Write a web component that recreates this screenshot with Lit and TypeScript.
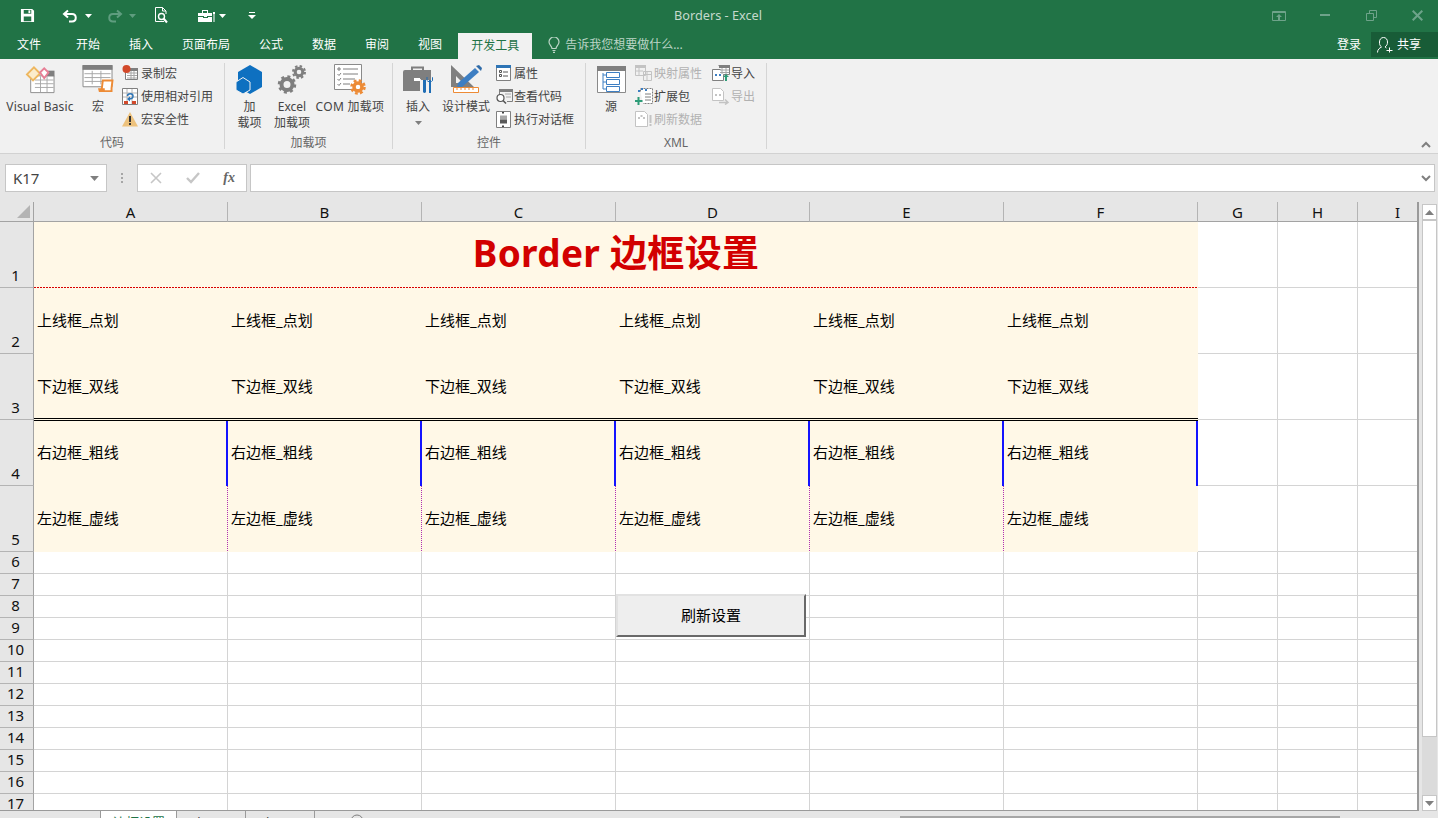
import { LitElement, html, css } from "lit";
import { customElement } from "lit/decorators.js";

const icons: Record<string, any> = {
  save: html`<svg width="15" height="15" viewBox="0 0 16 16"><path fill="#fff" fill-rule="evenodd" d="M1 1h12l2 2v12H1zM4 2v4h8V2zM4 9v5h8V9z"/><rect x="9" y="2.500" width="2" height="3" fill="#fff"/></svg>`,
  undo: html`<svg width="16" height="14" viewBox="0 0 16 14"><path fill="none" stroke="#fff" stroke-width="2" d="M6 1.500 2 5l4 3.500M2.500 5H10c5 0 5 7.500 0 7.500H7"/></svg>`,
  redo: html`<svg width="16" height="14" viewBox="0 0 16 14"><path fill="none" stroke="#5f9d7f" stroke-width="2" d="M10 1.500 14 5l-4 3.500M13.500 5H6c-5 0-5 7.500 0 7.500h3"/></svg>`,
  preview: html`<svg width="16" height="17" viewBox="0 0 16 17"><path fill="none" stroke="#fff" d="M10 14.500H1.500v-14h7l3.500 3.500v3M8.500.5v3.500H12"/><circle cx="7.500" cy="9.500" r="3" fill="none" stroke="#fff" stroke-width="1.400"/><path stroke="#fff" stroke-width="2" d="m9.500 11.500 3.500 4"/></svg>`,
  tool: html`<svg width="18" height="14" viewBox="0 0 18 14"><path fill="#fff" d="M0 4h14v3H9v1H6V7H0zM0 8h5v1h5V8h4v5H0zM4 1h6v3H9V2H5v2H4z"/><path fill="#fff" d="M15 3h2v2h-.5v8h-1V5H15z"/></svg>`,
  custom: html`<svg width="8" height="8" viewBox="0 0 8 8"><path fill="#fff" d="M1 0h6v1H1zM0 3h8L4 7z"/></svg>`,
  vb: html`<svg width="31" height="28" viewBox="0 0 32 30"><path fill="#fff" stroke="#8a8a8a" d="M5.500 10.500h25v18h-25z"/><path fill="#7f7f7f" d="M22 5h9v6h-9z"/><path stroke="#a6a6a6" d="M10 15h20M10 19h20M10 23h20M16 11v17M23 11v17"/><path fill="#fbeccb" stroke="#eeb75f" stroke-width="2" d="M1.500 9 9 1.500 15.500 8 8 15.500z"/><path fill="#fff" stroke="#e77f96" stroke-width="2" d="M15.500 7 20 2.500 24.500 7 20 13z"/></svg>`,
  macro: html`<svg width="32" height="29" viewBox="0 0 32 30"><path fill="#fff" stroke="#8a8a8a" d="M.5.500h30v22H.5z"/><path fill="#7f7f7f" d="M0 0h31v5H0z"/><path stroke="#a6a6a6" d="M2 9h27M2 13h27M2 17h20M10 6v14M19 6v14"/><path fill="#fff" stroke="#ed8b36" stroke-width="2" d="M21 16h10l-1 8v3H18c2-1 2-2 2-3z"/><path fill="#ed8b36" d="M16 24h7v4h-6z"/></svg>`,
  rec: html`<svg width="16" height="16" viewBox="0 0 16 16"><path fill="#fff" stroke="#7f7f7f" d="M3.500 3.500h12v11h-12z"/><path fill="#7f7f7f" d="M8 3h8v3H8z"/><path stroke="#a6a6a6" d="M5 8h10M5 10.500h10M5 13h10M9 6v8M12 6v8"/><circle cx="4.500" cy="4" r="4" fill="#d2492a"/></svg>`,
  rel: html`<svg width="17" height="17" viewBox="0 0 17 17"><path fill="#fff" stroke="#7f7f7f" d="M.5.500h15v16H.5z"/><path stroke="#b4b4b4" d="M1 5h14M1 9h14M5 1v15M10 1v15"/><path fill="#d2492a" d="M2 13h4v3H2zM10 13h4v3h-4z"/><path fill="none" stroke="#2e75b6" stroke-width="1.500" d="M5.500 8c0-3 5.500-3 5.500 0 0 2-1.500 3-4 3"/><path fill="#2e75b6" d="M8 8.500v5l-3-2.500z"/></svg>`,
  warn: html`<svg width="16" height="15" viewBox="0 0 16 15"><path fill="#edc27d" d="M8 0l8 14.500H0z"/><path fill="#333" d="M7 4h2v6H7zM7 11h2v2H7z"/></svg>`,
  addin: html`<svg width="27" height="29" viewBox="0 0 27 29"><path fill="#0e70c0" d="M14 0 26 7v15l-12 7L2 22V7z"/><path fill="#0e70c0" stroke="#f1f1f1" d="M7 12.500 14 17v8l-7 4-7-4v-8z"/></svg>`,
  gears: html`<svg width="30" height="30" viewBox="0 0 30 30"><g fill="none" stroke="#7f7f7f"><circle cx="10" cy="19.500" r="5.500" stroke-width="4"/><circle cx="10" cy="19.500" r="8" stroke-width="2.500" stroke-dasharray="3 3.300"/><circle cx="22" cy="7" r="3.800" stroke-width="3"/><circle cx="22" cy="7" r="6" stroke-width="2" stroke-dasharray="2.500 2.200"/></g></svg>`,
  com: html`<svg width="32" height="32" viewBox="0 0 32 32"><path fill="#fff" stroke="#8a8a8a" d="M.5.500h27v25H.5z"/><path stroke="#7f7f7f" d="M9 5h15M9 10h15M9 15h12M9 20h7"/><path fill="none" stroke="#7f7f7f" d="M4 4h2v2H4zM3.500 10l1.500 1.500L7 9M3.500 15l1.500 1.500L7 14M3.500 20l1.500 1.500L7 19"/><g fill="none" stroke="#ed8b36"><circle cx="24" cy="23" r="4" stroke-width="3.500"/><circle cx="24" cy="23" r="6.500" stroke-width="2.500" stroke-dasharray="2.800 2.300"/></g></svg>`,
  insert: html`<svg width="30" height="28" viewBox="0 0 30 28"><path fill="none" stroke="#7f7f7f" stroke-width="2" d="M9 5V1.500h11V5"/><path fill="#7f7f7f" d="M2 4h26v10H18v-1h-6v2h5v10H0V14h10v1H0V6q0-2 2-2z"/><path fill="#fff" d="M11 12h6v3h-6z"/><path fill="#1f6db5" d="M20 14h3v12q-1.500 2-3 0zM26 14h2v13h-2zM24.500 11v4h4.500v-4l1 .5v3l-2 1.500h-3l-1.500-2v-3z"/></svg>`,
  design: html`<svg width="32" height="30" viewBox="0 0 32 30"><path fill="#7f7f7f" fill-rule="evenodd" d="M1 0 24 22H1zM6 11v7h7z"/><path fill="#3d7ec2" d="M8 18 25 3l4 4-17 15-5 1z"/><path fill="#2f6ba8" d="M26 1l3-1 3 3-1 3z"/><path fill="#fff" stroke="#ed8b36" d="M3.500 22.500h25v5h-25z"/><path stroke="#ed8b36" d="M7 23v2M11 23v2M15 23v2M19 23v2M23 23v2"/></svg>`,
  prop: html`<svg width="15" height="16" viewBox="0 0 15 16"><path fill="#fff" stroke="#7f7f7f" d="M.5.500h14v15H.5z"/><path fill="#2e75b6" d="M0 0h15v3H0z"/><path stroke="#555" d="M7 7h5M7 11h5"/><path fill="none" stroke="#555" d="M3.500 5.500h2v2h-2zM3.500 9.500h2v2h-2z"/></svg>`,
  code: html`<svg width="17" height="17" viewBox="0 0 17 17"><path fill="none" stroke="#7f7f7f" d="M3.500 7V2.500h13v11H11"/><path fill="#7f7f7f" d="M3 1h14v3H3z"/><path stroke="#a6a6a6" d="M9 6h6M10 9h5"/><circle cx="4.500" cy="10" r="3.500" fill="#fff" stroke="#555" stroke-width="1.200"/><path stroke="#555" stroke-width="1.600" d="m7 12.500 3 3"/></svg>`,
  dialog: html`<svg width="15" height="17" viewBox="0 0 15 17"><path fill="#fff" stroke="#7f7f7f" d="M.5.500h14v16H.5z"/><path fill="#444" d="M6 1h2v1.500H6zM6 14.500h2V16H6z"/><path fill="#a6a6a6" d="M4 4.500h7v4H4z"/><path fill="#595959" d="M4 8.500h7v4H4z"/></svg>`,
  source: html`<svg width="29" height="27" viewBox="0 0 29 27"><path fill="#fff" stroke="#8a8a8a" d="M.5.500h28v26H.5z"/><path fill="#7f7f7f" d="M0 0h29v5H0z"/><path fill="#fff" stroke="#3d7ec2" d="M9.500 6.500h13v5h-13zM9.500 13.500h13v5h-13zM9.500 20.500h13v5h-13z"/><path stroke="#3d7ec2" d="M6 7v16M6 9h3M6 16h3M6 23h3"/></svg>`,
  map: html`<svg width="17" height="16" viewBox="0 0 17 16"><path fill="none" stroke="#c3c3c3" d="M.5.500h10v10H.5zM8.500 6.500h8v9h-8z"/><path fill="#c3c3c3" d="M0 0h11v3H0z"/><path stroke="#c3c3c3" d="M1 6h7M4 3v7M9 9.500h7M12 7v8"/></svg>`,
  pack: html`<svg width="19" height="18" viewBox="0 0 19 18"><path fill="#fff" stroke="#7f7f7f" stroke-dasharray="2 1" d="M5.500 4.500V1.500h12v15H8"/><path stroke="#7f7f7f" d="M10 7h6M10 10h6M10 13h6"/><path fill="#3d7ec2" d="M3 3h2v2H3zM10 2h2v2h-2zM6 1h2v2H6z"/><path fill="#2e9c78" d="M2.500 10h2v3h3v2h-3v3h-2v-3H0v-2h2.500z"/></svg>`,
  imp: html`<svg width="18" height="17" viewBox="0 0 18 17"><path fill="#fff" stroke="#7f7f7f" d="M.5 4.500h11v11H.5z"/><path fill="#fff" stroke="#7f7f7f" d="M6.500.5h11v9h-6"/><path fill="#7f7f7f" d="M7 0h11v3H7z"/><path stroke="#a6a6a6" d="M8 5h9M8 7.500h9M10 3v6M14 3v6"/><path fill="#3d7ec2" d="M3 9h2v2H3zM7 9h2v2H7z"/><path fill="#2e9c78" d="M14 9l3 3h-2v4h-2v-4h-2z"/></svg>`,
  exp: html`<svg width="18" height="17" viewBox="0 0 18 17"><path fill="#fff" stroke="#c3c3c3" d="M.5.500h8l3 3v9h-11z"/><path fill="#c3c3c3" d="M3 6h2v2H3zM7 6h2v2H7z"/><path fill="none" stroke="#c3c3c3" stroke-width="1.500" d="M7 14.500h9m-3-3 3 3-3 2"/></svg>`,
  refresh: html`<svg width="19" height="18" viewBox="0 0 19 18"><path fill="#fff" stroke="#c3c3c3" d="M.5 1.500h9l3 3v12H.5z"/><path fill="#c3c3c3" d="M3 7h2v2H3zM8 7h2v2H8zM5.500 5h2v2h-2zM14.500 5h2v8h-2zM14.500 14h2v2h-2z"/></svg>`,
  bulb: html`<svg width="12" height="16" viewBox="0 0 12 16"><path fill="none" stroke="#bcd5c7" stroke-width="1.200" d="M4 11.500C4 9 1 8 1 5a5 5 0 0 1 10 0c0 3-3 4-3 6.500zM4.500 13.500h3M5 15.300h2"/></svg>`,
  user: html`<svg width="16" height="16" viewBox="0 0 16 16"><path fill="none" stroke="#fff" d="M.5 15.500c0-3 2-4.500 4-5.500-2-1.500-2-3-2-5 0-2.500 1.500-4.500 4-4.500s4 2 4 4.500c0 2-.5 3.500-2.500 5 .5.500 1 .7 1.500 1M9.500 13.500h6M12.500 10.500v5"/></svg>`,
  pin: html`<svg width="14" height="10" viewBox="0 0 14 10"><path fill="none" stroke="#6ea38a" d="M.5.500h13v9H.5z"/><path fill="#6ea38a" d="M1 1h12v1H1zM7 3l3 3H8v3H6V6H4z"/></svg>`,
  min: html`<svg width="10" height="3" viewBox="0 0 10 3"><path fill="#6ea38a" d="M0 0h10v2H0z"/></svg>`,
  restore: html`<svg width="11" height="11" viewBox="0 0 11 11"><path fill="none" stroke="#6ea38a" d="M.5 3.500h7v7h-7zM3.500 3V.5h7v7H8"/></svg>`,
  close: html`<svg width="11" height="11" viewBox="0 0 11 11"><path stroke="#6ea38a" stroke-width="2" d="m.7.700 9.600 9.600M10.300.700.700 10.300"/></svg>`,
  plus: html`<svg width="14" height="14" viewBox="0 0 14 14"><circle cx="7" cy="7" r="6" fill="none" stroke="#7f7f7f"/><path stroke="#7f7f7f" d="M4 7h6M7 4v6"/></svg>`,
};

const caret = (c: string, w = 7, h = 4) =>
  html`<svg class="caret" width=${w} height=${h} viewBox="0 0 7 4"><path fill=${c} d="M0 0h7L3.500 4z"/></svg>`;

type Small = { icon: string; text: string; off?: boolean };
const small = (it: Small) =>
  html`<div class="small ${it.off ? "off" : ""}"><span class="sicon">${icons[it.icon]}</span><span>${it.text}</span></div>`;
const big = (icon: string, lines: string[], cls: string, extra?: unknown) =>
  html`<div class="big ${cls}"><span class="bicon">${icons[icon]}</span>${lines.map((l) => html`<span class="bl">${l}</span>`)}${extra ?? ""}</div>`;

const COLS = ["A", "B", "C", "D", "E", "F"];
const ROW_TEXT = ["上线框_点划", "下边框_双线", "右边框_粗线", "左边框_虚线"];
const ROW_CLASS = ["r2", "r3", "r4", "r5"];

@customElement("app-root")
export class AppRoot extends LitElement {
  static styles = css`
    :host { display: block; width: 1438px; height: 818px; overflow: hidden; font-family: "Noto Sans", "Noto Sans CJK SC", sans-serif; font-size: 12px; color: #444; background: #e6e6e6; }
    .app { display: flex; flex-direction: column; width: 1438px; height: 818px; }
    .title { height: 31px; flex: none; background: #217346; display: flex; align-items: center; position: relative; color: #cfe0d6; }
    .qat { display: flex; align-items: center; padding-left: 20px; }
    .qat > * { flex: none; display: flex; }
    .m1 { margin-right: 27px; } .m2 { margin-right: 7px; } .m3 { margin-right: 15px; } .m4 { margin-right: 6px; }
    .m5 { margin-right: 18px; } .m6 { margin-right: 28px; } .m7 { margin-right: 3px; } .m8 { margin-right: 22px; }
    .appname { position: absolute; left: 0; right: 0; top: 8px; text-align: center; line-height: 15px; padding-right: 2px; font-size: 12.7px; color: #c5dacd; }
    .win { margin-left: auto; margin-right: -2px; display: flex; align-items: center; }
    .win span { width: 46px; display: flex; justify-content: center; }
    .tabs { height: 28px; flex: none; background: #217346; display: flex; align-items: stretch; padding-left: 17px; gap: 29px; color: #fff; line-height: 28px; }
    .tabs .first { margin-right: 6px; }
    .tabs .active { background: #f1f1f1; color: #217346; padding: 0 13px; margin: 2px -13px 0; line-height: 26px; }
    .tell { display: flex; align-items: center; gap: 5px; color: #bcd5c7; }
    .acct { margin-left: auto; display: flex; align-items: center; gap: 10px; }
    .share { width: 67px; height: 25px; margin-top: -1px; background: #185c37; display: flex; align-items: center; gap: 4px; padding-left: 6px; box-sizing: border-box; }

    .ribbon { height: 94px; flex: none; background: #f1f1f1; border-bottom: 1px solid #d2d2d2; box-sizing: content-box; display: flex; position: relative; }
    .group { position: relative; display: flex; flex: none; box-sizing: border-box; height: 94px; padding-top: 4px; }
    .group::after { content: ""; position: absolute; right: 0; top: 4px; height: 86px; width: 1px; background: #d5d5d5; }
    .g1 { width: 225px; padding-left: 6px; } .g2 { width: 168px; } .g3 { width: 193px; padding-left: 7px; } .g4 { width: 181px; padding-left: 11px; }
    .glabel { position: absolute; left: 0; right: 1px; top: 76px; text-align: center; line-height: 16px; color: #666; }
    .big { display: flex; flex-direction: column; align-items: center; flex: none; color: #444; }
    .bicon { height: 33px; display: flex; align-items: center; justify-content: center; margin-bottom: 3px; }
    .bl { line-height: 16px; white-space: nowrap; }
    .big .caret { margin-top: 6px; }
    .w-vb { width: 68px; } .w-vb .bl { letter-spacing: 0.15px; } .w-macro { width: 48px; }
    .w-add { width: 49px; } .w-xl { width: 36px; } .w-com { width: 70px; margin-left: 5px; } .w-com .bl { letter-spacing: 0.3px; }
    .w-ins { width: 36px; } .w-des { width: 48px; margin-left: 6px; } .w-src { width: 28px; }
    .col { display: flex; flex-direction: column; flex: none; gap: 3px; }
    .c-ctl { margin-left: 6px; } .c-ctl .sicon { width: 18px; } .c-xml { margin-left: 10px; } .c-xml2 { margin-left: 10px; }
    .small { height: 20px; display: flex; align-items: center; white-space: nowrap; color: #444; }
    .small.off { color: #b1b1b1; }
    .sicon { width: 19px; display: flex; justify-content: flex-start; flex: none; }
    .chev { position: absolute; right: 7px; bottom: 5px; }

    .fbar { height: 48px; flex: none; background: #e6e6e6; display: flex; align-items: flex-start; padding: 10px 3px 0 5px; box-sizing: border-box; }
    .fbox { height: 28px; box-sizing: border-box; background: #fff; border: 1px solid #c6c6c6; display: flex; align-items: center; }
    .name { width: 102px; padding: 0 7px 0 7px; justify-content: space-between; font-size: 15px; color: #444; }
    .dots { width: 30px; display: flex; flex-direction: column; align-items: center; justify-content: center; height: 28px; gap: 2px; }
    .dots i { width: 2px; height: 2px; background: #a6a6a6; }
    .fx { width: 110px; justify-content: space-between; padding: 0 11px 0 12px; margin-right: 3px; color: #666; }
    .fx i { font-family: "Liberation Serif", serif; font-size: 14px; font-weight: bold; }
    .input { flex: 1; justify-content: flex-end; padding-right: 3px; }

    .body { flex: 1; min-height: 0; display: flex; }
    .sheet { position: relative; width: 1419px; height: 608px; overflow: hidden; background: #fff; box-sizing: border-box; border-right: 2px solid #9a9a9a; }
    .grid { display: grid; grid-template-columns: 34px repeat(6, 194px) 80px 80px 80px; grid-template-rows: 20px repeat(5, 66px) repeat(12, 22px); font-size: 15px; color: #000; }
    .grid > div { box-sizing: border-box; min-width: 0; }
    .ch { background: #e6e6e6; border-bottom: 1px solid #a3a3a3; border-right: 1px solid #b4b4b4; text-align: center; line-height: 20px; color: #111; }
    .corner { background: #e6e6e6; border-bottom: 1px solid #a3a3a3; border-right: 1px solid #a3a3a3; display: flex; align-items: flex-end; justify-content: flex-end; padding: 0 3px 3px 0; }
    .rh { background: #e6e6e6; border-bottom: 1px solid #b4b4b4; border-right: 1px solid #a3a3a3; display: flex; align-items: flex-end; justify-content: center; line-height: 23px; padding: 0 2px 0 0; color: #111; }
    .c { border-right: 1px solid #d4d4d4; border-bottom: 1px solid #d4d4d4; }
    .f { background-color: #fff8e7; display: flex; align-items: center; padding: 0 0 4px 3px; white-space: nowrap; position: relative; }
    .titlecell { grid-column: span 6; justify-content: center; padding: 0 0 8px; font-size: 37px; letter-spacing: 0.3px; font-weight: 700; color: #d20000; background-image: repeating-linear-gradient(to right, #d80000 0 2px, transparent 2px 3px); background-size: 100% 1px; background-repeat: no-repeat; background-position: bottom; }
    .f.r3::after { content: ""; position: absolute; left: 0; right: 0; bottom: 1px; height: 1px; background: #000; }
    .f.r4 { border-right: 2px solid #1414ff; }
    .f.r4::before { content: ""; position: absolute; left: 0; right: -2px; top: 0; height: 1px; background: #000; }
    .f.r5.dot { background-image: repeating-linear-gradient(to bottom, #b030b0 0 1px, transparent 1px 2px); background-size: 1px 100%; background-repeat: no-repeat; background-position: 100% 0; }
    .btn { position: absolute; left: 616px; top: 392px; width: 190px; height: 43px; box-sizing: border-box; background: #eeeeee; border-top: 2px solid #e2e2e2; border-left: 2px solid #e2e2e2; border-right: 2px solid #696969; border-bottom: 2px solid #696969; display: flex; align-items: center; justify-content: center; padding-bottom: 3px; font-size: 15px; color: #000; }
    .vs { position: relative; z-index: 1; width: 19px; flex: none; height: 609px; box-sizing: border-box; padding: 2px 0 0 3px; display: flex; flex-direction: column; background: #e6e6e6; }
    .vs .b { width: 15px; height: 16px; box-sizing: border-box; background: #fff; border: 1px solid #c6c6c6; display: flex; align-items: center; justify-content: center; flex: none; }
    .vs .thumb { width: 15px; height: 517px; box-sizing: border-box; background: #fff; border: 1px solid #c6c6c6; flex: none; }
    .vs .track { flex: 1; background: #dbdbdb; width: 15px; }
    .stabs { position: relative; height: 7px; flex: none; background: #e6e6e6; border-top: 1px solid #9a9a9a; display: flex; overflow: hidden; font-size: 13px; padding-left: 100px; line-height: 16px; color: #444; box-sizing: content-box; }
    .stab { padding: 3px 13px 0; white-space: nowrap; }
    .stab.on { width: 77px; box-sizing: border-box; background: #fff; color: #217346; margin-top: -1px; height: 9px; padding: 4px 0 0 12px; border-left: 1px solid #9a9a9a; border-right: 1px solid #9a9a9a; }
    .stab.sep { border-right: 1px solid #9a9a9a; }
    .stab.add { padding: 3px 0 0 35px; }
    .hs { position: absolute; left: 900px; width: 440px; top: 5px; height: 2px; background: #a6a6a6; }
  `;

  render() {
    const rowHead = (n: number) => html`<div class="rh">${n}</div>`;
    const emptyRow = (n: number) => html`${rowHead(n)}${Array.from({ length: 9 }, () => html`<div class="c"></div>`)}`;
    return html`<div class="app">
      <div class="title">
        <div class="qat">
          <span class="m1">${icons.save}</span>
          <span class="m2">${icons.undo}</span>
          <span class="m3">${caret("#fff")}</span>
          <span class="m4">${icons.redo}</span>
          <span class="m5">${caret("#5f9d7f")}</span>
          <span class="m6">${icons.preview}</span>
          <span class="m7">${icons.tool}</span>
          <span class="m8">${caret("#fff")}</span>
          <span>${icons.custom}</span>
        </div>
        <div class="appname">Borders - Excel</div>
        <div class="win">
          <span>${icons.pin}</span><span>${icons.min}</span><span>${icons.restore}</span><span>${icons.close}</span>
        </div>
      </div>
      <div class="tabs">
        <span class="first">文件</span><span>开始</span><span>插入</span><span>页面布局</span><span>公式</span><span>数据</span><span>审阅</span><span>视图</span>
        <span class="active">开发工具</span>
        <span class="tell">${icons.bulb}告诉我您想要做什么...</span>
        <div class="acct"><span>登录</span><div class="share">${icons.user}<span>共享</span></div></div>
      </div>
      <div class="ribbon">
        <div class="group g1">
          ${big("vb", ["Visual Basic"], "w-vb")}
          ${big("macro", ["宏"], "w-macro")}
          <div class="col">
            ${small({ icon: "rec", text: "录制宏" })}
            ${small({ icon: "rel", text: "使用相对引用" })}
            ${small({ icon: "warn", text: "宏安全性" })}
          </div>
          <div class="glabel">代码</div>
        </div>
        <div class="group g2">
          ${big("addin", ["加", "载项"], "w-add")}
          ${big("gears", ["Excel", "加载项"], "w-xl")}
          ${big("com", ["COM 加载项"], "w-com")}
          <div class="glabel">加载项</div>
        </div>
        <div class="group g3">
          ${big("insert", ["插入"], "w-ins", caret("#7f7f7f"))}
          ${big("design", ["设计模式"], "w-des")}
          <div class="col c-ctl">
            ${small({ icon: "prop", text: "属性" })}
            ${small({ icon: "code", text: "查看代码" })}
            ${small({ icon: "dialog", text: "执行对话框" })}
          </div>
          <div class="glabel">控件</div>
        </div>
        <div class="group g4">
          ${big("source", ["源"], "w-src")}
          <div class="col c-xml">
            ${small({ icon: "map", text: "映射属性", off: true })}
            ${small({ icon: "pack", text: "扩展包" })}
            ${small({ icon: "refresh", text: "刷新数据", off: true })}
          </div>
          <div class="col c-xml2">
            ${small({ icon: "imp", text: "导入" })}
            ${small({ icon: "exp", text: "导出", off: true })}
          </div>
          <div class="glabel">XML</div>
        </div>
        <svg class="chev" width="10" height="7" viewBox="0 0 10 7"><path fill="none" stroke="#7f7f7f" stroke-width="2" d="m1 6 4-4 4 4"/></svg>
      </div>
      <div class="fbar">
        <div class="fbox name"><span>K17</span>${caret("#7f7f7f", 9, 5)}</div>
        <div class="dots"><i></i><i></i><i></i></div>
        <div class="fbox fx">
          <svg width="12" height="12" viewBox="0 0 12 12"><path stroke="#c6c6c6" stroke-width="1.600" d="m1 1 10 10M11 1 1 11"/></svg>
          <svg width="14" height="12" viewBox="0 0 14 12"><path fill="none" stroke="#c6c6c6" stroke-width="2.400" d="m1 6 4 4 8-9"/></svg>
          <i>fx</i>
        </div>
        <div class="fbox input"><svg width="10" height="7" viewBox="0 0 10 7"><path fill="none" stroke="#7f7f7f" stroke-width="2" d="m1 1 4 4 4-4"/></svg></div>
      </div>
      <div class="body">
        <div class="sheet">
          <div class="grid">
            <div class="corner"><svg width="13" height="13" viewBox="0 0 13 13"><path fill="#b4b4b4" d="M13 0v13H0z"/></svg></div>
            ${COLS.map((c) => html`<div class="ch">${c}</div>`)}
            <div class="ch">G</div><div class="ch">H</div><div class="ch">I</div>
            ${rowHead(1)}
            <div class="f titlecell">Border 边框设置</div>
            <div class="c"></div><div class="c"></div><div class="c"></div>
            ${ROW_TEXT.map(
              (t, i) => html`${rowHead(i + 2)}
                ${COLS.map((_, j) => html`<div class="f ${ROW_CLASS[i]} ${j < 5 ? "dot" : ""}">${t}</div>`)}
                <div class="c"></div><div class="c"></div><div class="c"></div>`
            )}
            ${Array.from({ length: 12 }, (_, i) => emptyRow(i + 6))}
          </div>
          <div class="btn">刷新设置</div>
        </div>
        <div class="vs">
          <div class="b"><svg width="9" height="5" viewBox="0 0 9 5"><path fill="#7f7f7f" d="M4.500 0 9 5H0z"/></svg></div>
          <div class="thumb"></div>
          <div class="track"></div>
          <div class="b"><svg width="9" height="5" viewBox="0 0 9 5"><path fill="#7f7f7f" d="M0 0h9L4.500 5z"/></svg></div>
        </div>
      </div>
      <div class="stabs">
        <div class="stab on">边框设置</div>
        <div class="stab sep">Sheet2</div>
        <div class="stab sep">Sheet3</div>
        <div class="stab add">${icons.plus}</div>
        <div class="hs"></div>
      </div>
    </div>`;
  }
}
